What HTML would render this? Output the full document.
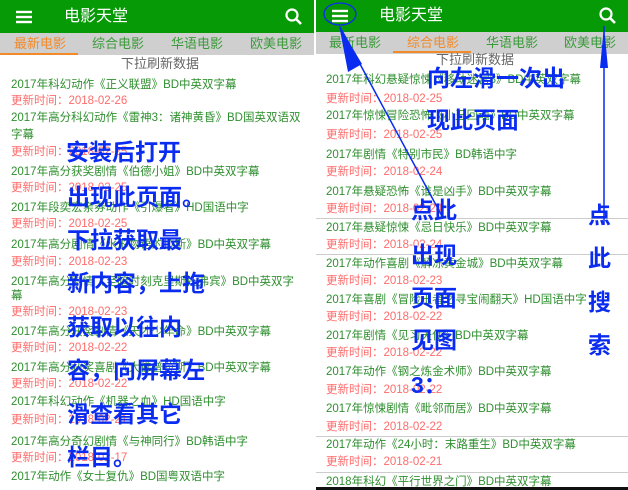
<!DOCTYPE html>
<html><head><meta charset="utf-8"><style>
*{margin:0;padding:0;box-sizing:border-box}
body{width:628px;height:490px;position:relative;overflow:hidden;background:#fff;font-family:"Liberation Sans","Noto Sans CJK SC",sans-serif}
.a{position:absolute;white-space:nowrap;line-height:16px;font-size:11.5px}
.g{color:#2f8f2f}
.r{color:#ff6b6b}
.hdr{position:absolute;top:0;height:33px;background:#079a07}
.tabs{position:absolute;top:33px;height:22px;background:#cfcfcf}
.tab{position:absolute;top:0;line-height:22px;font-size:13px;color:#3a9a3a}
.ht{position:absolute;top:7px;color:#fff;font-size:16px;line-height:20px}
.b{position:absolute;color:#0a2cf0;font-weight:bold;font-size:23px;line-height:28px;white-space:nowrap}
.hl{position:absolute;height:1px;background:#ccc}
</style></head><body>
<div class="hdr" style="left:0;width:314px"></div>
<svg style="position:absolute;left:14px;top:9px" width="20" height="16"><g stroke="#fff" stroke-width="2.4"><line x1="2" y1="3" x2="18" y2="3"/><line x1="2" y1="8" x2="18" y2="8"/><line x1="2" y1="13" x2="18" y2="13"/></g></svg>
<div class="ht" style="left:64px">电影天堂</div>
<svg style="position:absolute;left:284px;top:7px" width="20" height="20"><circle cx="8" cy="8" r="5.5" fill="none" stroke="#fff" stroke-width="2.2"/><line x1="12" y1="12" x2="17" y2="17" stroke="#fff" stroke-width="2.6"/></svg>
<div class="tabs" style="left:0;width:314px"></div>
<div class="tab" style="left:14px;top:33px;color:#f28a2a">最新电影</div>
<div class="tab" style="left:92px;top:33px">综合电影</div>
<div class="tab" style="left:171px;top:33px">华语电影</div>
<div class="tab" style="left:250px;top:33px">欧美电影</div>
<div style="position:absolute;left:0;top:53px;width:78px;height:2px;background:#f28a2a"></div>
<div class="a" style="left:121px;top:56px;color:#666;font-size:13px">下拉刷新数据</div>
<div class="a g" style="left:11px;top:77px">2017年科幻动作《正义联盟》BD中英双字幕</div>
<div class="a r" style="left:11px;top:93px">更新时间：2018-02-26</div>
<div class="a g" style="left:11px;top:110px">2017年高分科幻动作《雷神3：诸神黄昏》BD国英双语双</div>
<div class="a g" style="left:11px;top:127px">字幕</div>
<div class="a r" style="left:11px;top:144px">更新时间：2018-02-25</div>
<div class="a g" style="left:11px;top:164px">2017年高分获奖剧情《伯德小姐》BD中英双字幕</div>
<div class="a r" style="left:11px;top:180px">更新时间：2018-02-25</div>
<div class="a g" style="left:11px;top:200px">2017年段奕宏亲券动作《引爆者》HD国语中字</div>
<div class="a r" style="left:11px;top:216px">更新时间：2018-02-25</div>
<div class="a g" style="left:11px;top:237px">2017年高分剧情《水形物语的拉斯》BD中英双字幕</div>
<div class="a r" style="left:11px;top:254px">更新时间：2018-02-23</div>
<div class="a g" style="left:11px;top:274px">2017年高分剧情《至暗时刻克里斯托弗宾》BD中英双字</div>
<div class="a g" style="left:11px;top:288px">幕</div>
<div class="a r" style="left:11px;top:304px">更新时间：2018-02-23</div>
<div class="a g" style="left:11px;top:324px">2017年高分获奖剧情《天才少年命》BD中英双字幕</div>
<div class="a r" style="left:11px;top:340px">更新时间：2018-02-22</div>
<div class="a g" style="left:11px;top:360px">2017年高分获奖喜剧《大佛普拉斯》BD中英双字幕</div>
<div class="a r" style="left:11px;top:376px">更新时间：2018-02-22</div>
<div class="a g" style="left:11px;top:394px">2017年科幻动作《机器之血》HD国语中字</div>
<div class="a r" style="left:11px;top:412px">更新时间：2018-02-21</div>
<div class="a g" style="left:11px;top:434px">2017年高分奇幻剧情《与神同行》BD韩语中字</div>
<div class="a r" style="left:11px;top:450px">更新时间：2018-02-17</div>
<div class="a g" style="left:11px;top:469px">2017年动作《女士复仇》BD国粤双语中字</div>
<div class="b" style="left:66px;top:138px">安装后打开</div>
<div class="b" style="left:67px;top:183px">出现此页面。</div>
<div class="b" style="left:67px;top:226px">下拉获取最</div>
<div class="b" style="left:67px;top:269px">新内容，上拖</div>
<div class="b" style="left:67px;top:313px">获取以往内</div>
<div class="b" style="left:67px;top:356px">容，向屏幕左</div>
<div class="b" style="left:67px;top:400px">滑查看其它</div>
<div class="b" style="left:67px;top:443px">栏目。</div>

<div class="hdr" style="left:316px;width:312px;height:32px"></div>
<svg style="position:absolute;left:330px;top:8px" width="20" height="16"><g stroke="#fff" stroke-width="2.4"><line x1="2" y1="3" x2="18" y2="3"/><line x1="2" y1="8" x2="18" y2="8"/><line x1="2" y1="13" x2="18" y2="13"/></g></svg>
<div class="ht" style="left:379px;top:6px">电影天堂</div>
<svg style="position:absolute;left:598px;top:6px" width="20" height="20"><circle cx="8" cy="8" r="5.5" fill="none" stroke="#fff" stroke-width="2.2"/><line x1="12" y1="12" x2="17" y2="17" stroke="#fff" stroke-width="2.6"/></svg>
<div class="tabs" style="left:316px;width:312px;top:32px"></div>
<div class="tab" style="left:329px;top:32px">最新电影</div>
<div class="tab" style="left:407px;top:32px;color:#f28a2a">综合电影</div>
<div class="tab" style="left:486px;top:32px">华语电影</div>
<div class="tab" style="left:564px;top:32px">欧美电影</div>
<div style="position:absolute;left:393px;top:51px;width:78px;height:2px;background:#f28a2a"></div>
<div class="a" style="left:436px;top:52px;color:#666;font-size:13px">下拉刷新数据</div>
<div class="a g" style="left:326px;top:72px">2017年科幻悬疑惊悚《移动迷宫3》BD中英双字幕</div>
<div class="a r" style="left:326px;top:91px">更新时间：2018-02-25</div>
<div class="a g" style="left:326px;top:108px">2017年惊悚冒险恐怖《小丑回魂》BD中英双字幕</div>
<div class="a r" style="left:326px;top:127px">更新时间：2018-02-25</div>
<div class="a g" style="left:326px;top:147px">2017年剧情《特别市民》BD韩语中字</div>
<div class="a r" style="left:326px;top:164px">更新时间：2018-02-24</div>
<div class="a g" style="left:326px;top:184px">2017年悬疑恐怖《谁是凶手》BD中英双字幕</div>
<div class="a r" style="left:326px;top:201px">更新时间：2018-02-24</div>
<div class="hl" style="left:316px;top:218px;width:312px"></div>
<div class="a g" style="left:326px;top:220px">2017年悬疑惊悚《忌日快乐》BD中英双字幕</div>
<div class="a r" style="left:326px;top:237px">更新时间：2018-02-24</div>
<div class="hl" style="left:316px;top:254px;width:312px"></div>
<div class="a g" style="left:326px;top:256px">2017年动作喜剧《解冻黄金城》BD中英双字幕</div>
<div class="a r" style="left:326px;top:273px">更新时间：2018-02-23</div>
<div class="a g" style="left:326px;top:292px">2017年喜剧《冒险王者之寻宝闹翻天》HD国语中字</div>
<div class="a r" style="left:326px;top:309px">更新时间：2018-02-22</div>
<div class="a g" style="left:326px;top:328px">2017年剧情《见习天使》BD中英双字幕</div>
<div class="a r" style="left:326px;top:345px">更新时间：2018-02-22</div>
<div class="a g" style="left:326px;top:364px">2017年动作《钢之炼金术师》BD中英双字幕</div>
<div class="a r" style="left:326px;top:382px">更新时间：2018-02-22</div>
<div class="a g" style="left:326px;top:401px">2017年惊悚剧情《毗邻而居》BD中英双字幕</div>
<div class="a r" style="left:326px;top:419px">更新时间：2018-02-22</div>
<div class="hl" style="left:316px;top:436px;width:312px"></div>
<div class="a g" style="left:326px;top:437px">2017年动作《24小时：末路重生》BD中英双字幕</div>
<div class="a r" style="left:326px;top:454px">更新时间：2018-02-21</div>
<div class="hl" style="left:316px;top:472px;width:312px"></div>
<div class="a g" style="left:326px;top:474px">2018年科幻《平行世界之门》BD中英双字幕</div>
<div style="position:absolute;left:316px;top:487px;width:312px;height:3px;background:#111"></div>
<div class="b" style="left:427px;top:64px">向左滑一次出</div>
<div class="b" style="left:427px;top:106px">现此页面</div>
<div class="b" style="left:411px;top:196px">点此</div>
<div class="b" style="left:411px;top:241px">出现</div>
<div class="b" style="left:411px;top:284px">页面</div>
<div class="b" style="left:411px;top:326px">见图</div>
<div class="b" style="left:411px;top:371px">3：</div>
<div class="b" style="left:588px;top:201px">点</div>
<div class="b" style="left:588px;top:244px">此</div>
<div class="b" style="left:588px;top:288px">搜</div>
<div class="b" style="left:588px;top:331px">索</div>
<svg style="position:absolute;left:0;top:0" width="628" height="490">
<ellipse cx="340" cy="14" rx="16" ry="11" fill="none" stroke="#0a2cf0" stroke-width="1.3"/>
<line x1="340" y1="27" x2="443" y2="218" stroke="#0a2cf0" stroke-width="1.5"/>
<polygon points="339,25 348,72 362,64" fill="#0a2cf0"/>
<line x1="604" y1="26" x2="604" y2="225" stroke="#0a2cf0" stroke-width="1.5"/>
<polygon points="604,26 600,68 608,68" fill="#0a2cf0"/>
</svg>
</body></html>
